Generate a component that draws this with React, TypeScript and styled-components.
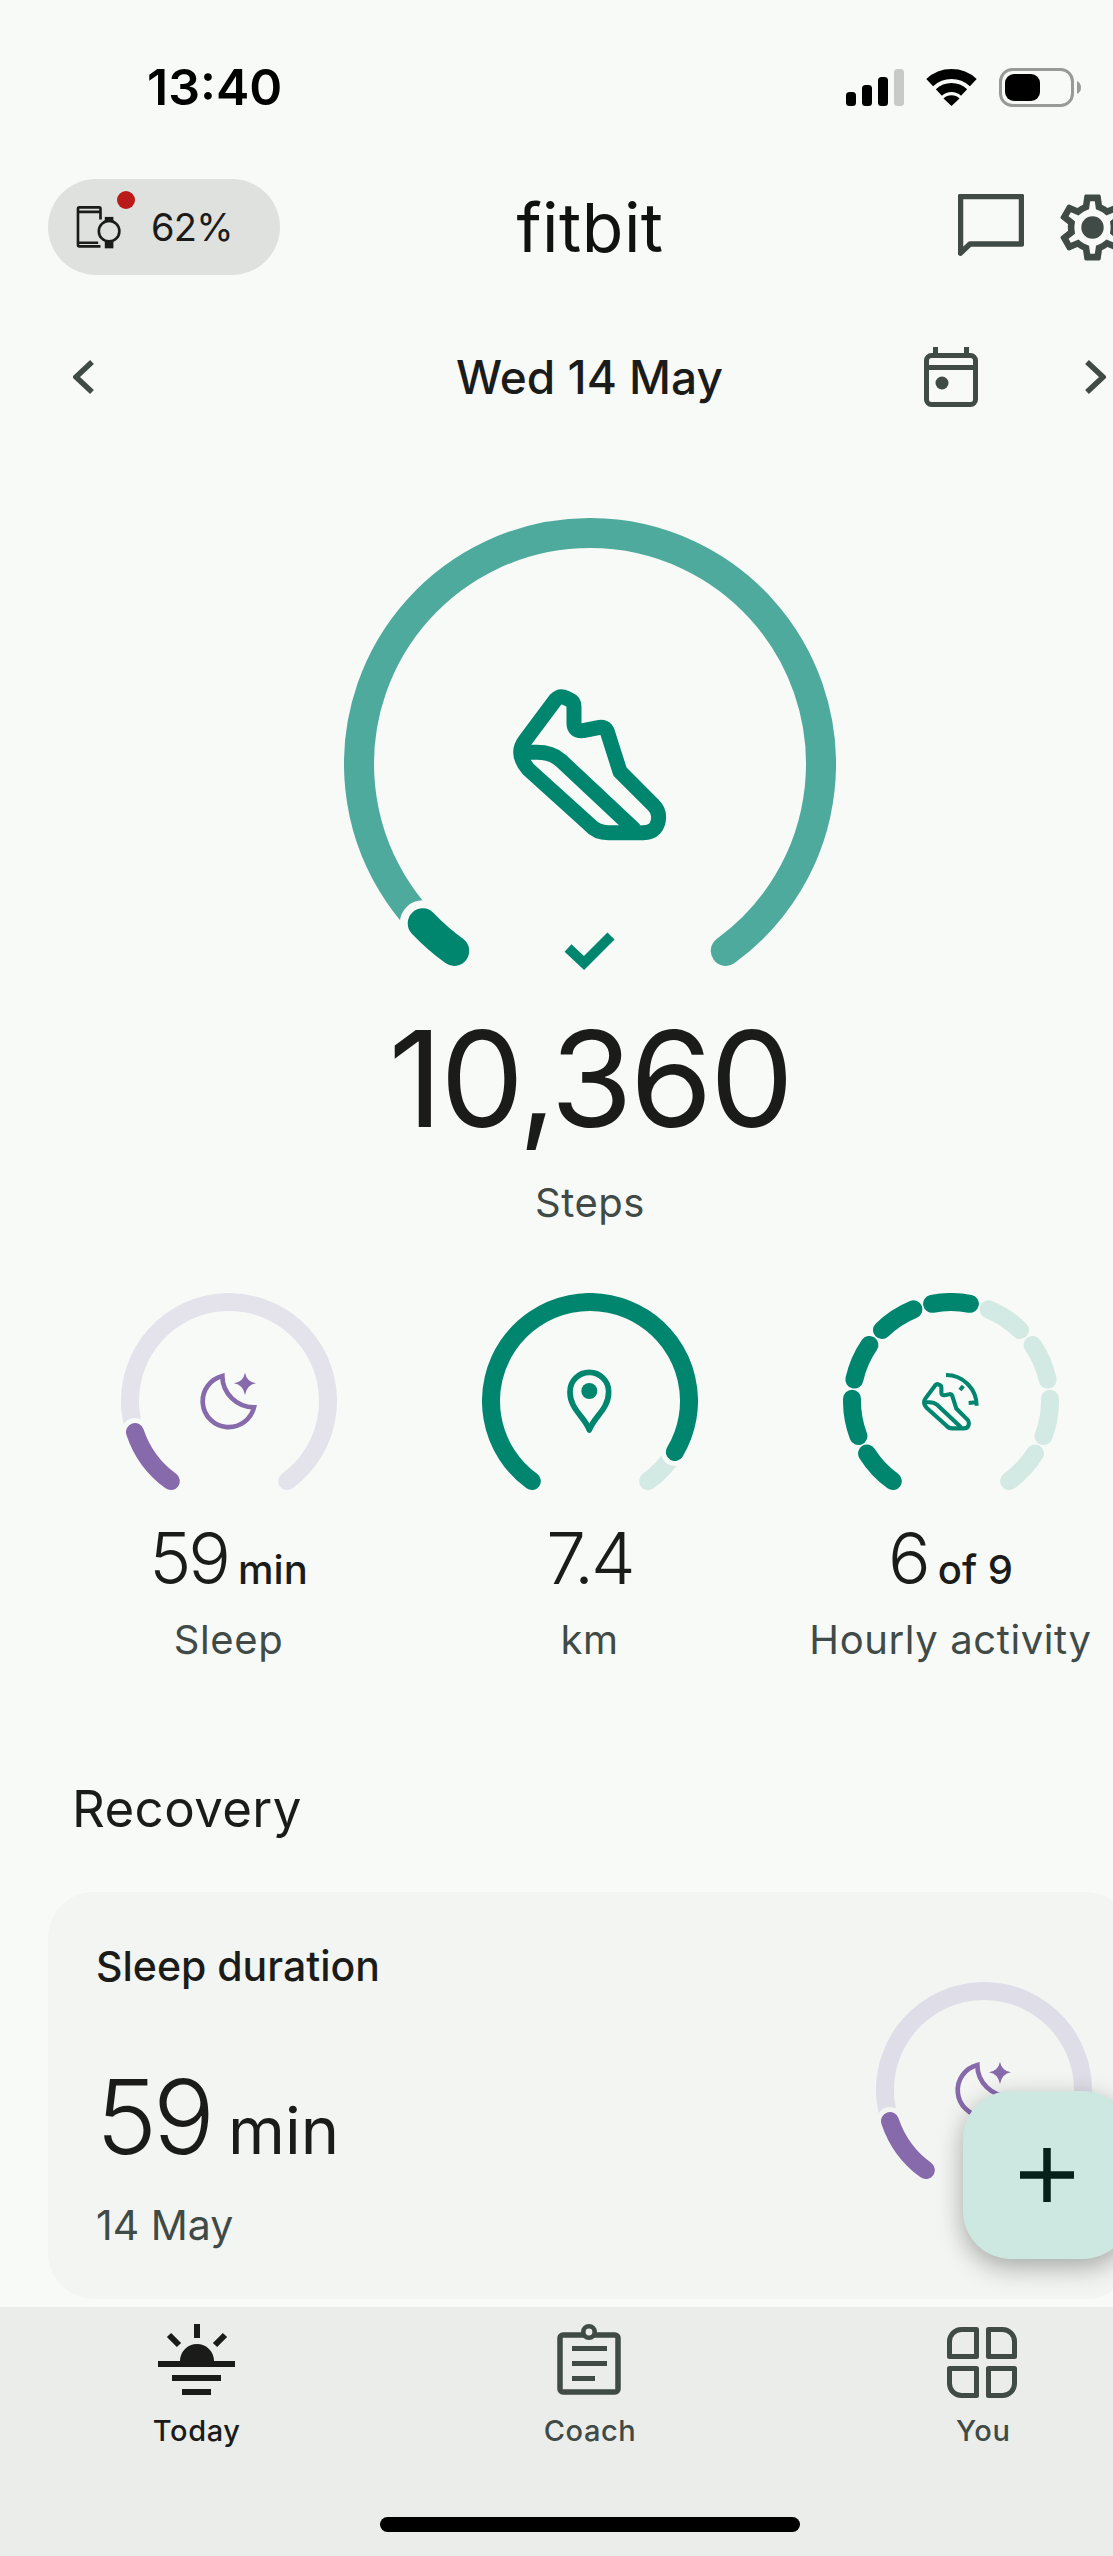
import React from "react";
import styled, { createGlobalStyle } from "styled-components";

const INK = "#1b1c1a";
const MUTED = "#404a46";
const PAGE = "#f8faf7";
const CARD = "#f3f5f2";
const TEAL = "#00856f";
const TEAL_MID = "#4eaa9c";
const TEAL_PALE = "#d3e9e3";
const PURPLE = "#876aab";

const GlobalStyle = createGlobalStyle`
  html, body {
    margin: 0;
    padding: 0;
    background: ${PAGE};
    font-family: Inter, "Noto Sans", sans-serif;
    color: ${INK};
  }
`;

const Viewport = styled.div`
  width: 1113px;
  height: 2556px;
  overflow: hidden;
`;

const Frame = styled.div`
  position: relative;
  width: 1180px;
  height: 2556px;
  display: flex;
  flex-direction: column;
  background: ${PAGE};
`;

const StatusBar = styled.div`
  display: flex;
  justify-content: space-between;
  align-items: center;
  height: 39px;
  margin-top: 68px;
  padding: 0 99px 0 147px;
`;

const Clock = styled.div`
  font-size: 50px;
  line-height: 39px;
  font-weight: 600;
  color: #000;
`;

const StatusIcons = styled.div`
  display: flex;
  align-items: center;
  gap: 22px;
`;

const Header = styled.div`
  display: grid;
  grid-template-columns: 1fr auto 1fr;
  align-items: center;
  height: 96px;
  margin-top: 72px;
  padding: 0 48px;
`;

const BatteryPill = styled.div`
  position: relative;
  display: flex;
  align-items: center;
  gap: 30px;
  width: 232px;
  height: 96px;
  box-sizing: border-box;
  padding-left: 28px;
  border-radius: 48px;
  background: #dfe1df;
  font-size: 38px;
  font-weight: 400;
  letter-spacing: -0.8px;
`;

const RedDot = styled.span`
  position: absolute;
  left: 69px;
  top: 12px;
  width: 18px;
  height: 18px;
  border-radius: 50%;
  background: #bb1a1a;
`;

const Logo = styled.div`
  font-size: 68px;
  line-height: 80px;
  letter-spacing: 0.5px;
  color: #111;
`;

const HeaderActions = styled.div`
  display: flex;
  justify-content: flex-end;
  align-items: center;
  gap: 29px;
`;

const DateRow = styled.div`
  display: grid;
  grid-template-columns: 1fr auto 1fr;
  align-items: center;
  height: 60px;
  margin-top: 72px;
  padding: 0 74px 0 73px;
`;

const DateLabel = styled.div`
  font-size: 46px;
  line-height: 60px;
  font-weight: 500;
`;

const DateActions = styled.div`
  display: flex;
  justify-content: flex-end;
  align-items: center;
  gap: 106px;
`;

const Hero = styled.div`
  display: flex;
  flex-direction: column;
  align-items: center;
  margin-top: 111px;
`;

const HeroValue = styled.div`
  margin-top: 29px;
  font-size: 133px;
  line-height: 140px;
  font-weight: 400;
  letter-spacing: -2.5px;
`;

const HeroLabel = styled.div`
  margin-top: 29px;
  font-size: 40px;
  line-height: 50px;
  letter-spacing: 0.5px;
  color: ${MUTED};
`;

const GaugeSvg = styled.svg`
  display: block;
  flex: none;
`;

const ArcPath = styled.path<{ $tone: string; $width: number }>`
  fill: none;
  stroke: ${(p) => p.$tone};
  stroke-width: ${(p) => p.$width}px;
  stroke-linecap: round;
`;

const StatGrid = styled.div`
  display: grid;
  grid-template-columns: repeat(3, 361px);
  margin-top: 65px;
  padding: 0 48px;
`;

const Stat = styled.div`
  display: flex;
  flex-direction: column;
  align-items: center;
`;

const StatValue = styled.div`
  margin-top: 27px;
  font-size: 71px;
  line-height: 80px;
  font-weight: 350;
  letter-spacing: -3px;
  white-space: nowrap;
`;

const StatUnit = styled.span`
  margin-left: 10px;
  font-size: 40px;
  line-height: 1;
  font-weight: 450;
  letter-spacing: 0;
`;

const StatLabel = styled.div`
  margin-top: 17px;
  font-size: 40px;
  line-height: 50px;
  letter-spacing: 0.6px;
  color: ${MUTED};
  white-space: nowrap;
`;

const SectionTitle = styled.div`
  margin-top: 114px;
  padding-left: 72px;
  font-size: 51px;
  line-height: 60px;
  letter-spacing: 0.4px;
`;

const Card = styled.div`
  display: flex;
  justify-content: space-between;
  align-items: flex-start;
  box-sizing: border-box;
  height: 407px;
  margin: 53px 48px 0;
  padding: 49px 40px 0 48px;
  border-radius: 46px;
  background: ${CARD};
`;

const CardTitle = styled.div`
  font-size: 41px;
  line-height: 50px;
  font-weight: 500;
`;

const CardValue = styled.div`
  margin-top: 71px;
  font-size: 103px;
  line-height: 110px;
  font-weight: 350;
  letter-spacing: -4px;
`;

const CardUnit = styled.span`
  margin-left: 17px;
  font-size: 65px;
  line-height: 1;
  font-weight: 400;
  letter-spacing: 0;
`;

const CardDate = styled.div`
  margin-top: 28px;
  font-size: 41px;
  line-height: 50px;
  color: ${MUTED};
`;

const CardGauge = styled.div`
  margin-top: 41px;
`;

const Fab = styled.div`
  position: absolute;
  right: 49px;
  bottom: 297px;
  display: flex;
  align-items: center;
  justify-content: center;
  width: 168px;
  height: 168px;
  border-radius: 48px;
  background: #cde8e1;
  box-shadow: 0 8px 26px rgba(0, 0, 0, 0.32);
`;

const BottomNav = styled.nav`
  position: relative;
  display: grid;
  grid-template-columns: repeat(3, 1fr);
  box-sizing: border-box;
  height: 249px;
  margin-top: 8px;
  padding-top: 15px;
  background: #ebedeb;
`;

const NavItem = styled.div<{ $active?: boolean }>`
  display: flex;
  flex-direction: column;
  align-items: center;
  color: ${(p) => (p.$active ? INK : MUTED)};
`;

const NavLabel = styled.div`
  margin-top: 11px;
  font-size: 29px;
  line-height: 40px;
  font-weight: 500;
  letter-spacing: 0.6px;
`;

const HomeIndicator = styled.div`
  position: absolute;
  left: 380px;
  bottom: 24px;
  width: 420px;
  height: 15px;
  border-radius: 8px;
  background: #000;
`;

type Arc = { from: number; to: number; tone: string; halo?: string };

const polar = (r: number, deg: number) => {
  const a = (deg * Math.PI) / 180;
  return [r * Math.sin(a), -r * Math.cos(a)].map((n) => n.toFixed(2)).join(" ");
};

const arcPath = (r: number, from: number, to: number) =>
  `M${polar(r, from)} A${r} ${r} 0 ${to - from > 180 ? 1 : 0} 1 ${polar(r, to)}`;

function Gauge({
  radius,
  stroke,
  gap,
  arcs,
  children,
}: {
  radius: number;
  stroke: number;
  gap: number;
  arcs: Arc[];
  children?: React.ReactNode;
}) {
  const outer = radius + stroke / 2;
  const bottom = radius > 200 ? 216 : 90;
  return (
    <GaugeSvg
      width={outer * 2}
      height={outer + bottom}
      viewBox={`${-outer} ${-outer} ${outer * 2} ${outer + bottom}`}
    >
      {arcs.map((arc, i) => (
        <React.Fragment key={i}>
          {arc.halo && (
            <ArcPath d={arcPath(radius, arc.from, arc.to)} $tone={arc.halo} $width={stroke + gap * 2} />
          )}
          <ArcPath d={arcPath(radius, arc.from, arc.to)} $tone={arc.tone} $width={stroke} />
        </React.Fragment>
      ))}
      {children}
    </GaugeSvg>
  );
}

const SHOE_OUTLINE =
  "M706 600 L617 719 Q585 760 625 808 L810 975 Q830 998 865 998 L970 998 Q1015 998 1016 950 Q1016 930 1000 915 L900 815 L862 695 Q855 678 835 683 L790 692 Q762 695 762 670 L762 620 Q762 605 750 600 L738 594 Q720 585 706 600 Z";
const SHOE_SOLE = "M610 757 L650 757 Q695 757 722 781 L945 990";

const ShoeShape = ({ width }: { width: number }) => (
  <g fill="none" stroke={TEAL} strokeWidth={width} strokeLinejoin="round">
    <path d={SHOE_OUTLINE} />
    <path d={SHOE_SOLE} />
  </g>
);

const MoonIcon = () => (
  <g transform="translate(-139 -131) scale(0.3333)">
    <path
      d="M397 318 A78 78 0 1 0 492 412 A95 95 0 0 1 397 318 Z"
      fill="none"
      stroke={PURPLE}
      strokeWidth="14"
      strokeLinejoin="miter"
    />
    <path d="M465 308 Q470 335 498 340 Q470 345 465 375 Q460 345 432 340 Q460 335 465 308 Z" fill={PURPLE} />
  </g>
);

const PinIcon = () => (
  <g transform="translate(-140 -131) scale(0.3333)">
    <path
      d="M418 480 C405 440 360 420 360 365 A58 58 0 1 1 476 365 C476 420 431 440 418 480 Z"
      fill="none"
      stroke={TEAL}
      strokeWidth="17"
      strokeLinejoin="round"
    />
    <circle cx="418" cy="363" r="24" fill={TEAL} />
  </g>
);

const ActiveIcon = () => (
  <g transform="translate(-161 -131) scale(0.3333)">
    <g transform="translate(206.5 150.7) scale(0.325)">
      <ShoeShape width={38} />
    </g>
    <path
      d="M468 315 A92 92 0 0 1 560 407 M520 348 L510 360 M558 397 L536 399"
      fill="none"
      stroke={TEAL}
      strokeWidth="12"
    />
  </g>
);

const SignalIcon = () => (
  <svg width="58" height="37" viewBox="0 0 58 37">
    <rect x="0" y="23" width="10" height="14" rx="3.5" fill="#000" />
    <rect x="16" y="16" width="10" height="21" rx="3.5" fill="#000" />
    <rect x="32" y="8" width="10" height="29" rx="3.5" fill="#000" />
    <rect x="48" y="0" width="10" height="37" rx="3.5" fill="#c8cac8" />
  </svg>
);

const WifiIcon = () => (
  <svg width="51" height="37" viewBox="0 0 51 37">
    <g fill="none" stroke="#000">
      <path d="M3.7 13.6 A32 32 0 0 1 47.3 13.6" strokeWidth="10" />
      <path d="M12.9 23.5 A18.5 18.5 0 0 1 38.1 23.5" strokeWidth="9" />
    </g>
    <path d="M25.5 37 L17.5 29.5 A11.5 11.5 0 0 1 33.5 29.5 Z" fill="#000" />
  </svg>
);

const BatteryIcon = () => (
  <svg width="82" height="39" viewBox="0 0 82 39">
    <rect x="1.5" y="1.5" width="72" height="36" rx="12" fill="none" stroke="#999" strokeWidth="3" />
    <rect x="6" y="6" width="35" height="27" rx="9" fill="#000" />
    <path d="M78 13 Q82 15 82 19.5 Q82 24 78 26 Z" fill="#999" />
  </svg>
);

const DevicesIcon = () => (
  <svg width="45" height="44" viewBox="138 135 136 131">
    <g fill="none" stroke={INK} strokeWidth="8">
      <path d="M212 178 V145 Q212 141 208 141 H148 Q144 141 144 145 V255 Q144 259 148 259 H212" />
      <path d="M144 155 H212 M144 248 H205" />
      <circle cx="238" cy="213" r="31" />
    </g>
    <rect x="225" y="170" width="26" height="14" fill={INK} />
    <rect x="225" y="243" width="26" height="22" fill={INK} />
  </svg>
);

const ChatIcon = () => (
  <svg width="66" height="66" viewBox="0 0 66 66">
    <path d="M2.5 2.5 H63.5 V50 H12 L2.5 59 Z" fill="none" stroke={MUTED} strokeWidth="5.5" strokeLinejoin="round" />
  </svg>
);

const GearIcon = () => (
  <svg width="79" height="79" viewBox="0 0 24 24" fill={MUTED}>
    <path d="M19.43 12.98c.04-.32.07-.64.07-.98 0-.34-.03-.66-.07-.98l2.11-1.65c.19-.15.24-.42.12-.64l-2-3.46c-.09-.16-.26-.25-.44-.25-.06 0-.12.01-.17.03l-2.49 1c-.52-.4-1.08-.73-1.69-.98l-.38-2.65C14.46 2.18 14.25 2 14 2h-4c-.25 0-.46.18-.49.42l-.38 2.65c-.61.25-1.17.59-1.69.98l-2.49-1c-.06-.02-.12-.03-.18-.03-.17 0-.34.09-.43.25l-2 3.46c-.13.22-.07.49.12.64l2.11 1.65c-.04.32-.07.65-.07.98 0 .33.03.66.07.98l-2.11 1.65c-.19.15-.24.42-.12.64l2 3.46c.09.16.26.25.44.25.06 0 .12-.01.17-.03l2.49-1c.52.4 1.08.73 1.69.98l.38 2.65c.03.24.24.42.49.42h4c.25 0 .46-.18.49-.42l.38-2.65c.61-.25 1.17-.59 1.69-.98l2.49 1c.06.02.12.03.18.03.17 0 .34-.09.43-.25l2-3.46c.12-.22.07-.49-.12-.64l-2.11-1.65zm-1.98-1.71c.04.31.05.52.05.73 0 .21-.02.43-.05.73l-.14 1.13.89.7 1.08.84-.7 1.21-1.27-.51-1.04-.42-.9.68c-.43.32-.84.56-1.25.73l-1.06.43-.16 1.13-.2 1.35h-1.4l-.19-1.35-.16-1.13-1.06-.43c-.43-.18-.83-.41-1.23-.71l-.91-.7-1.06.43-1.27.51-.7-1.21 1.08-.84.89-.7-.14-1.13c-.03-.31-.05-.54-.05-.74s.02-.43.05-.73l.14-1.13-.89-.7-1.08-.84.7-1.21 1.27.51 1.04.42.9-.68c.43-.32.84-.56 1.25-.73l1.06-.43.16-1.13.2-1.35h1.39l.19 1.35.16 1.13 1.06.43c.43.18.83.41 1.23.71l.91.7 1.06-.43 1.27-.51.7 1.21-1.07.85-.89.7.14 1.13z" />
    <circle cx="12" cy="12" r="3.4" />
  </svg>
);

const Chevron = ({ flip }: { flip?: boolean }) => (
  <svg width="22" height="34" viewBox="0 0 22 34">
    <path
      d={flip ? "M3 2 L19 17 L3 32" : "M19 2 L3 17 L19 32"}
      fill="none"
      stroke={MUTED}
      strokeWidth="5.5"
    />
  </svg>
);

const CalendarIcon = () => (
  <svg width="54" height="60" viewBox="0 0 54 60">
    <rect x="2.5" y="8.5" width="49" height="49" rx="5" fill="none" stroke={MUTED} strokeWidth="5" />
    <rect x="2" y="18" width="50" height="5" fill={MUTED} />
    <rect x="9" y="0" width="5" height="8" fill={MUTED} />
    <rect x="40" y="0" width="5" height="8" fill={MUTED} />
    <circle cx="18" cy="36" r="6.5" fill={MUTED} />
  </svg>
);

const TodayIcon = () => (
  <svg width="80" height="78" viewBox="0 0 80 78">
    <g fill={INK}>
      <rect x="37" y="2" width="6" height="14" />
      <path d="M12 13 L22 23 M68 13 L58 23" stroke={INK} strokeWidth="6" />
      <path d="M23 39 A17 17 0 0 1 57 39 Z" />
      <rect x="1" y="39" width="77" height="6" />
      <rect x="15" y="53" width="49" height="6" />
      <rect x="25" y="67" width="29" height="6" />
    </g>
  </svg>
);

const CoachIcon = () => (
  <svg width="80" height="78" viewBox="0 0 80 78">
    <rect x="10" y="13" width="58" height="57" rx="3" fill="none" stroke={MUTED} strokeWidth="5.5" />
    <circle cx="39" cy="10" r="5.7" fill="#ebedeb" stroke={MUTED} strokeWidth="4.6" />
    <rect x="22" y="24" width="35" height="5" fill={MUTED} />
    <rect x="22" y="39" width="35" height="5" fill={MUTED} />
    <rect x="22" y="54" width="23" height="5" fill={MUTED} />
  </svg>
);

const YouIcon = () => (
  <svg width="80" height="78" viewBox="0 0 80 78">
    <g fill="none" stroke={MUTED} strokeWidth="5" strokeLinejoin="round">
      <path d="M33.5 7.5 V34.5 H6.5 V19.5 A12 12 0 0 1 18.5 7.5 Z" />
      <path d="M45.5 7.5 H59.5 A12 12 0 0 1 71.5 19.5 V34.5 H45.5 Z" />
      <path d="M6.5 46.5 H33.5 V73.5 H18.5 A12 12 0 0 1 6.5 61.5 Z" />
      <path d="M45.5 46.5 H71.5 V61.5 A12 12 0 0 1 59.5 73.5 H45.5 Z" />
    </g>
  </svg>
);

const PlusIcon = () => (
  <svg width="54" height="54" viewBox="0 0 54 54">
    <path d="M27 0 V54 M0 27 H54" stroke="#06201a" strokeWidth="7.5" />
  </svg>
);

const hourlySegments: Arc[] = Array.from({ length: 9 }, (_, i) => ({
  from: 216 + i * 33.25,
  to: 238 + i * 33.25,
  tone: i < 5 ? TEAL : TEAL_PALE,
}));

export default function App() {
  return (
    <Viewport>
      <GlobalStyle />
      <Frame>
        <StatusBar>
          <Clock>13:40</Clock>
          <StatusIcons>
            <SignalIcon />
            <WifiIcon />
            <BatteryIcon />
          </StatusIcons>
        </StatusBar>

        <Header>
          <BatteryPill>
            <DevicesIcon />
            <span>62%</span>
            <RedDot />
          </BatteryPill>
          <Logo>fitbit</Logo>
          <HeaderActions>
            <ChatIcon />
            <GearIcon />
          </HeaderActions>
        </Header>

        <DateRow>
          <Chevron />
          <DateLabel>Wed 14 May</DateLabel>
          <DateActions>
            <CalendarIcon />
            <Chevron flip />
          </DateActions>
        </DateRow>

        <Hero>
          <Gauge
            radius={231}
            stroke={30}
            gap={8}
            arcs={[
              { from: 216, to: 504, tone: TEAL_MID },
              { from: 216, to: 226.4, tone: TEAL, halo: PAGE },
            ]}
          >
            <g transform="translate(-270 -264) scale(0.3333)">
              <ShoeShape width={45} />
            </g>
            <path d="M-22 184 L-6 199 L21 172" fill="none" stroke={TEAL} strokeWidth="10" />
          </Gauge>
          <HeroValue>10,360</HeroValue>
          <HeroLabel>Steps</HeroLabel>
        </Hero>

        <StatGrid>
          <Stat>
            <Gauge
              radius={99}
              stroke={18}
              gap={5}
              arcs={[
                { from: 216, to: 504, tone: "#e4e3ec" },
                { from: 216, to: 251.7, tone: PURPLE, halo: PAGE },
              ]}
            >
              <MoonIcon />
            </Gauge>
            <StatValue>
              59<StatUnit>min</StatUnit>
            </StatValue>
            <StatLabel>Sleep</StatLabel>
          </Stat>
          <Stat>
            <Gauge
              radius={99}
              stroke={18}
              gap={5}
              arcs={[
                { from: 121, to: 144, tone: TEAL_PALE },
                { from: 216, to: 481, tone: TEAL, halo: PAGE },
              ]}
            >
              <PinIcon />
            </Gauge>
            <StatValue>7.4</StatValue>
            <StatLabel>km</StatLabel>
          </Stat>
          <Stat>
            <Gauge radius={99} stroke={18} gap={0} arcs={hourlySegments}>
              <ActiveIcon />
            </Gauge>
            <StatValue>
              6<StatUnit>of 9</StatUnit>
            </StatValue>
            <StatLabel>Hourly activity</StatLabel>
          </Stat>
        </StatGrid>

        <SectionTitle>Recovery</SectionTitle>

        <Card>
          <div>
            <CardTitle>Sleep duration</CardTitle>
            <CardValue>
              59<CardUnit>min</CardUnit>
            </CardValue>
            <CardDate>14 May</CardDate>
          </div>
          <CardGauge>
            <Gauge
              radius={99}
              stroke={18}
              gap={5}
              arcs={[
                { from: 216, to: 504, tone: "#dfdde7" },
                { from: 216, to: 251.7, tone: PURPLE, halo: CARD },
              ]}
            >
              <MoonIcon />
            </Gauge>
          </CardGauge>
        </Card>

        <BottomNav>
          <NavItem $active>
            <TodayIcon />
            <NavLabel>Today</NavLabel>
          </NavItem>
          <NavItem>
            <CoachIcon />
            <NavLabel>Coach</NavLabel>
          </NavItem>
          <NavItem>
            <YouIcon />
            <NavLabel>You</NavLabel>
          </NavItem>
          <HomeIndicator />
        </BottomNav>

        <Fab>
          <PlusIcon />
        </Fab>
      </Frame>
    </Viewport>
  );
}
